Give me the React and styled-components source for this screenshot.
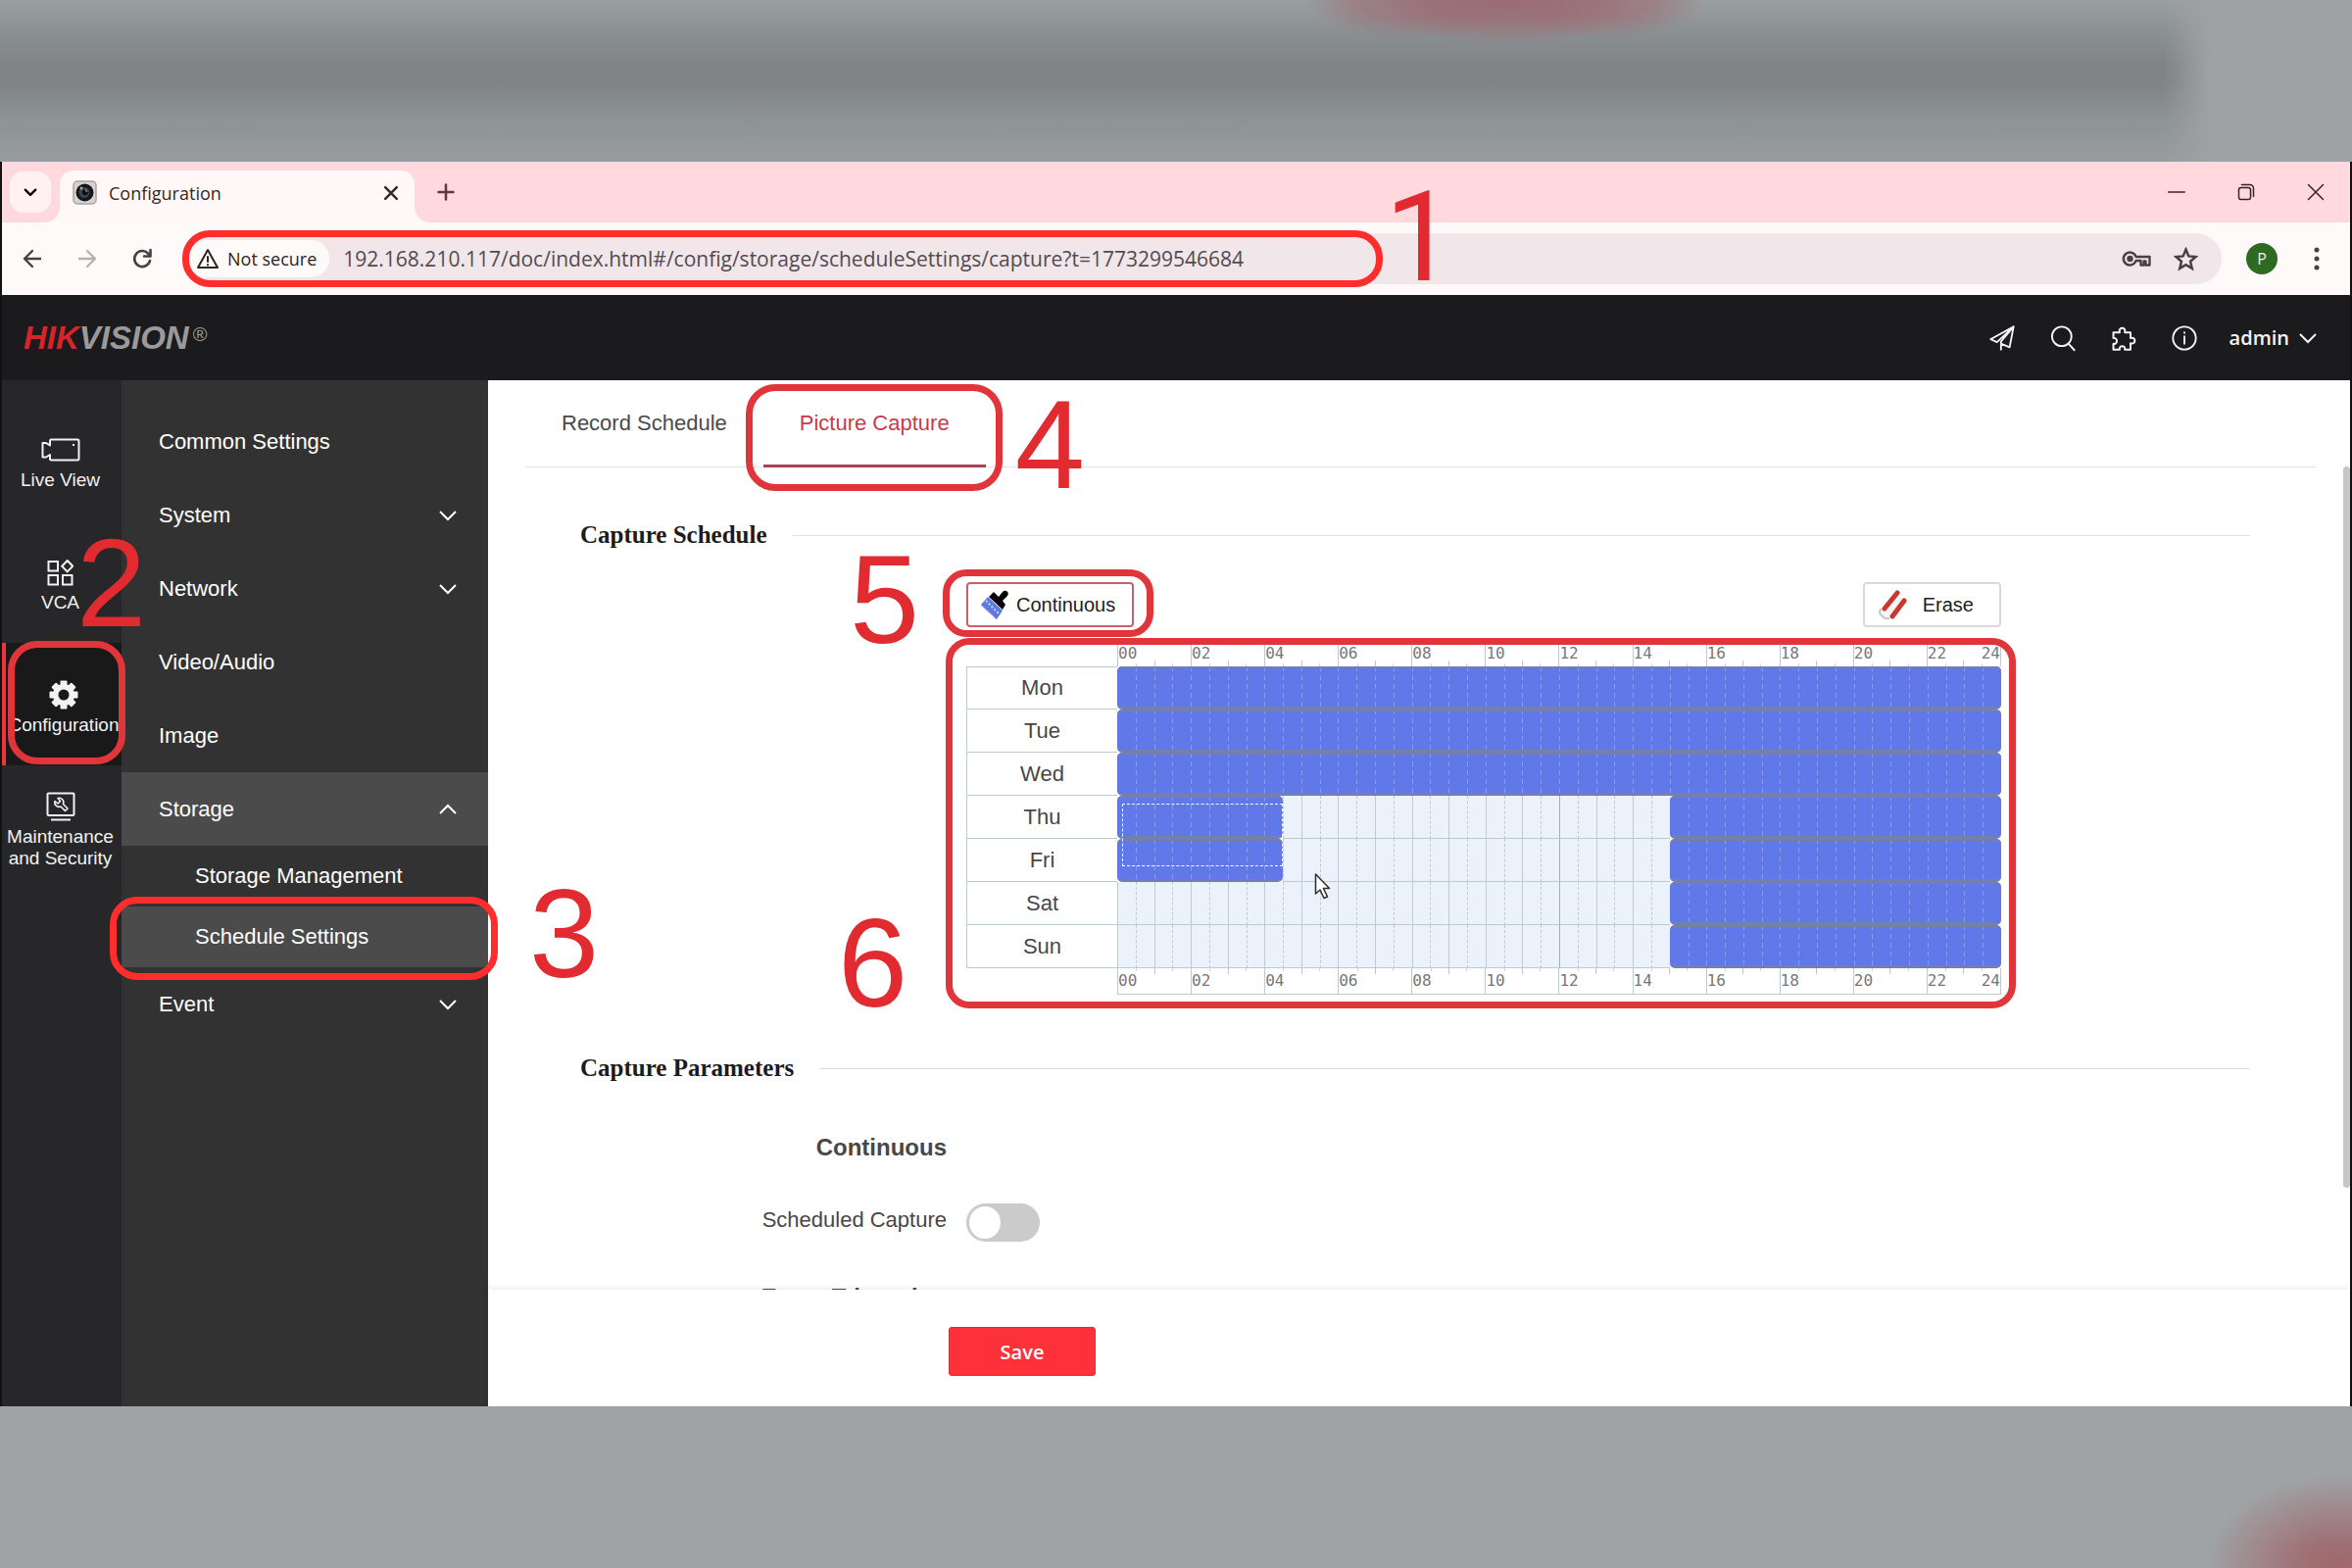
import React from "react";
import styled, { createGlobalStyle, css } from "styled-components";

const SANS = '"Liberation Sans", Arial, sans-serif';
const SERIF = '"Liberation Serif", "Times New Roman", serif';
const UI = '"Open Sans", "Noto Sans", sans-serif';
const MONO = '"DejaVu Sans Mono", "Liberation Mono", monospace';

const GlobalStyle = createGlobalStyle`
  *, *::before, *::after { box-sizing: border-box; }
  body { margin: 0; font-family: ${SANS}; }
  button, input { font: inherit; }
`;

const Backdrop = styled.div`
  display: flex;
  flex-direction: column;
  height: 100vh;
  min-height: 1500px;
  padding: 165px 0;
  overflow: hidden;
  background:
    radial-gradient(ellipse 135px 95px at calc(100% - 15px) 100%, #a0666a 0%, #a0666ad0 30%, #a0666a00 100%),
    radial-gradient(ellipse 110px 40px at 60% 0, #9c6a72b0 0%, #9c6a7290 50%, #9c6a7200 100%),
    radial-gradient(ellipse 110px 40px at 68% 0, #9c6a72b0 0%, #9c6a7290 50%, #9c6a7200 100%),
    radial-gradient(ellipse 130px 46px at 64% 0, #9c6a72 0%, #9c6a72b0 50%, #9c6a7200 100%),
    linear-gradient(90deg, #9ea2a400 92%, #9ea2a4 94%) top / 100% 165px no-repeat,
    linear-gradient(180deg, #9a9fa1 0, #8c9193 30px, #808487 65px, #808487 85px, #8d9294 120px, #979c9e 165px, #9fa3a5 200px);
`;

const Window = styled.div`
  flex: 1;
  min-height: 0;
  display: flex;
  flex-direction: column;
  border: solid #111;
  border-width: 0 2px;
  background: #fff;
`;

/* numbered guide marks laid over the controls they point to */
const Target = styled.div`
  position: relative;
`;

const Ring = styled.span`
  position: absolute;
  z-index: 3;
  left: ${(p) => p.$x}px;
  top: ${(p) => p.$y}px;
  width: ${(p) => p.$w}px;
  height: ${(p) => p.$h}px;
  border: 7px solid ${(p) => (p.$bright ? "#ff2d2c" : "#e0363b")};
  border-radius: ${(p) => p.$r || 24}px;
  pointer-events: none;
`;

const Digit = styled.span`
  position: absolute;
  z-index: 3;
  left: ${(p) => p.$x}px;
  top: ${(p) => p.$y}px;
  font-family: ${(p) => (p.$plain ? "Roboto, sans-serif" : SANS)};
  font-size: 128px;
  font-weight: 400;
  line-height: 132px;
  color: #e12b30;
  pointer-events: none;
`;

/* browser chrome */
const TabStrip = styled.div`
  flex: none;
  display: flex;
  align-items: flex-end;
  height: 62px;
  padding-left: 8px;
  background: #ffd9de;
`;

const PlainButton = styled.button`
  display: flex;
  align-items: center;
  justify-content: center;
  padding: 0;
  border: 0;
  background: none;
  color: inherit;
`;

const TabSearch = styled(PlainButton)`
  width: 42px;
  height: 42px;
  margin: 0 9px 10px 0;
  border-radius: 14px;
  background: #fff0f1;
`;

const BrowserTab = styled.div`
  position: relative;
  display: flex;
  align-items: center;
  gap: 12px;
  width: 362px;
  height: 53px;
  padding: 0 14px 8px 13px;
  border-radius: 14px 14px 0 0;
  background: #fff8f7;
  color: #33282b;
  font: 18px ${UI};
  &::before, &::after {
    content: "";
    position: absolute;
    bottom: 0;
    width: 14px;
    height: 14px;
  }
  &::before {
    right: 100%;
    background: radial-gradient(circle at 0 0, #fff8f700 13px, #fff8f7 14px);
  }
  &::after {
    left: 100%;
    background: radial-gradient(circle at 100% 0, #fff8f700 13px, #fff8f7 14px);
  }
`;

const TabTitle = styled.span`
  flex: 1;
`;

const NewTab = styled(PlainButton)`
  width: 40px;
  height: 40px;
  margin: 0 0 11px 12px;
  color: #5b3a42;
`;

const WindowButtons = styled.div`
  display: flex;
  margin-left: auto;
  height: 62px;
  color: #3a2327;
`;

const WindowButton = styled(PlainButton)`
  width: 71px;
`;

const Toolbar = styled.div`
  flex: none;
  display: flex;
  align-items: center;
  height: 74px;
  padding-left: 3px;
  background: #fffafa;
  color: #4a4044;
`;

const NavButton = styled(PlainButton)`
  width: 56px;
  height: 48px;
  color: ${(p) => (p.$off ? "#b9b0b2" : "#4a4044")};
`;

const Omnibox = styled.div`
  position: relative;
  flex: 1;
  display: flex;
  align-items: center;
  height: 52px;
  margin-left: 14px;
  padding: 0 12px 0 5px;
  border-radius: 26px;
  background: #f1e6ea;
`;

const SiteChip = styled(PlainButton)`
  gap: 8px;
  height: 38px;
  padding: 0 13px 0 8px;
  margin-right: 14px;
  border-radius: 19px;
  background: #fffafa;
  color: #2c2427;
  font: 500 18px ${UI};
`;

const Address = styled.input`
  flex: 1;
  min-width: 0;
  padding: 0;
  border: 0;
  outline: 0;
  background: none;
  color: #544b50;
  font: 21px ${UI};
`;

const OmniIcon = styled(PlainButton)`
  width: 50px;
  height: 40px;
`;

const Avatar = styled(PlainButton)`
  width: 32px;
  height: 32px;
  margin: 0 25px 0 25px;
  border-radius: 50%;
  background: #2f6a22;
  color: #e9f3e4;
  font: 16px ${UI};
`;

const Menu = styled(PlainButton)`
  width: 30px;
  height: 40px;
  margin-right: 19px;
`;

/* camera web client */
const Header = styled.header`
  flex: none;
  display: flex;
  align-items: center;
  height: 87px;
  padding: 0 34px 0 22px;
  background: #1b1b1d;
  color: #f4f4f4;
`;

const Brand = styled.span`
  display: flex;
  color: #9a9a9c;
  font: italic 700 33px ${SANS};
`;

const BrandRed = styled.span`
  color: #d6242b;
`;

const Registered = styled.sup`
  margin-left: 4px;
  font: 20px/30px ${SANS};
`;

const HeaderTools = styled.div`
  display: flex;
  align-items: center;
  gap: 30px;
  margin-left: auto;
`;

const HeaderButton = styled(PlainButton)`
  width: 32px;
  height: 40px;
`;

const UserButton = styled(PlainButton)`
  gap: 10px;
  height: 40px;
  font: 600 20px ${UI};
`;

const Body = styled.div`
  flex: 1;
  min-height: 0;
  display: flex;
`;

const Rail = styled.nav`
  flex: none;
  width: 122px;
  padding-top: 18px;
  background: #27272a;
`;

const RailLink = styled.a`
  display: flex;
  flex-direction: column;
  align-items: center;
  justify-content: center;
  gap: 4px;
  height: 125px;
  padding: 7px 3px 0 0;
  color: #f2f2f2;
  font-size: 19px;
  line-height: 22px;
  text-align: center;
  text-decoration: none;
  white-space: nowrap;
  ${(p) => p.$active && css`
    padding-right: 0;
    border-left: 4px solid #f0343a;
    background: #19191a;
  `}
`;

const RailIcon = styled.span`
  display: flex;
  align-items: center;
  justify-content: center;
  height: 32px;
`;

const Side = styled.nav`
  flex: none;
  width: 374px;
  padding-top: 25px;
  background: #323233;
`;

const SideLink = styled.a`
  display: flex;
  align-items: center;
  justify-content: space-between;
  height: ${(p) => (p.$sub ? 62 : 75)}px;
  padding: 0 32px 0 ${(p) => (p.$sub ? 75 : 38)}px;
  background: ${(p) => (p.$active ? "#4b4b4b" : "transparent")};
  color: #fff;
  font-size: 22px;
  text-decoration: none;
`;

const Main = styled.main`
  position: relative;
  flex: 1;
  min-width: 0;
  display: flex;
  flex-direction: column;
  background: #fff;
`;

const ScrollArea = styled.div`
  flex: 1;
  min-height: 0;
  overflow: hidden;
`;

const ScrollThumb = styled.span`
  position: absolute;
  top: 88px;
  right: 0;
  width: 7px;
  height: 736px;
  border-radius: 4px;
  background: #c6c6c6;
`;

const Tabs = styled.div`
  display: flex;
  height: 89px;
  margin: 0 35px 0 38px;
  border-bottom: 1px solid #e4e4e6;
`;

const Tab = styled.button`
  height: 89px;
  padding: 2px 37px 0;
  border: 0;
  border-bottom: 3px solid ${(p) => (p.$active ? "#a8405a" : "transparent")};
  background: none;
  color: ${(p) => (p.$active ? "#c83a4c" : "#4a4a4e")};
  font-size: 22px;
`;

const Section = styled.section`
  padding: ${(p) => (p.$first ? 54 : 60)}px 102px 0 94px;
`;

const SectionTitle = styled.h2`
  display: flex;
  align-items: center;
  gap: 26px;
  height: 30px;
  margin: 0 0 ${(p) => p.$gap}px;
  color: #1c1c1e;
  font: 700 25px/30px ${SERIF};
  white-space: nowrap;
  &::after {
    content: "";
    flex: 1;
    height: 1px;
    background: #e0e0e3;
  }
`;

const FormRow = styled.div`
  display: grid;
  grid-template-columns: 374px 1fr;
  column-gap: 20px;
`;

const ParamRow = styled(FormRow)`
  align-items: center;
  height: ${(p) => (p.$tall ? 84 : 74)}px;
`;

const ParamTitle = styled.h3`
  margin: 0;
  color: #47474a;
  font-size: 24px;
  text-align: right;
`;

const ParamLabel = styled.label`
  color: #47474a;
  font-size: 22px;
  text-align: right;
`;

const Toggle = styled.input`
  appearance: none;
  width: 75px;
  height: 39px;
  margin: 4px 0 0;
  padding: 3px;
  border-radius: 20px;
  background: #cbcbcb;
  &::before {
    content: "";
    display: block;
    width: 32px;
    height: 33px;
    border-radius: 50%;
    background: #fff;
  }
`;

const Scheduler = styled.div`
  grid-column: 2;
  margin-right: 254px;
`;

const BrushBar = styled.div`
  display: flex;
  justify-content: space-between;
  margin-bottom: 17px;
`;

const BrushButton = styled.button`
  display: flex;
  align-items: center;
  gap: ${(p) => (p.$active ? 6 : 16)}px;
  height: 46px;
  padding: 0 ${(p) => (p.$active ? 17 : 26)}px 0 13px;
  border: 2px solid ${(p) => (p.$active ? "#c9606e" : "#d9d9dc")};
  border-radius: 4px;
  background: #fff;
  color: #1d1d22;
  font-size: 20px;
`;

const WeekTable = styled.table`
  width: 100%;
  table-layout: fixed;
  border-collapse: separate;
  border-spacing: 0;
  color: #47474a;
  font-size: 22px;
`;

const DayColumn = styled.col`
  width: 154px;
`;

const Cell = styled.td`
  padding: 0;
`;

const DayCell = styled.th`
  height: 44px;
  padding: 0;
  border: solid #bccad2;
  border-width: 0 0 1px 1px;
  font-weight: 400;
  tr:first-child > & { border-top-width: 1px; }
`;

const Scale = styled.div`
  display: flex;
  height: ${(p) => (p.$foot ? 27 : 23)}px;
  border: solid #bccad2;
  border-width: 0 1px ${(p) => (p.$foot ? 1 : 0)}px 0;
  color: #77777a;
  font: 16px/20px ${MONO};
`;

const Hours = styled.span`
  flex: 1;
  display: flex;
  align-items: ${(p) => (p.$foot ? "center" : "flex-start")};
  justify-content: space-between;
  border-left: 1px solid #bccad2;
  background:
    linear-gradient(#c3c3c8, #c3c3c8) 50% ${(p) => (p.$foot ? 0 : "100%")} / 1px 6px no-repeat,
    linear-gradient(#d3d3d8, #d3d3d8) 25% ${(p) => (p.$foot ? 0 : "100%")} / 1px 3px no-repeat,
    linear-gradient(#d3d3d8, #d3d3d8) 75% ${(p) => (p.$foot ? 0 : "100%")} / 1px 3px no-repeat;
`;

const Track = styled.div`
  display: grid;
  grid-template-columns: repeat(48, minmax(0, 1fr));
  height: 44px;
`;

const Slot = styled.span`
  border-bottom: 1px solid #bccad2;
  border-left: 1px ${(p) => (p.$half ? "dashed" : "solid")} ${(p) => (p.$noon ? "#86b4de" : "#bfcad6")};
  background: #ebf2fb;
  ${(p) => p.$on && css`
    border-left: 0;
    border-bottom: 3px solid #747fae;
    background:
      repeating-linear-gradient(#8b9cec 0 5px, #6179e8 5px 9px) 0 0 / ${p.$start ? 0 : 1}px 100% no-repeat,
      #6179e8;
    box-shadow: inset 0 2px 0 #747fae;
  `}
  ${(p) => p.$start && css`border-radius: 5px 0 0 5px;`}
  ${(p) => p.$end && css`border-radius: 0 5px 5px 0;`}
`;

const Selection = styled.span`
  position: absolute;
  z-index: 2;
  top: 163px;
  left: 159px;
  width: 164px;
  height: 64px;
  border: 1px dashed #fff;
`;

const Pointer = styled.svg`
  position: absolute;
  z-index: 2;
  top: 233px;
  left: 355px;
`;

const Footer = styled.footer`
  position: relative;
  flex: none;
  height: 119px;
  padding: 38px 0 0 470px;
  background: #fff;
  box-shadow: 0 -2px 5px #00000012;
`;

const SaveButton = styled.button`
  width: 150px;
  height: 50px;
  border: 1px solid #d5303a;
  border-radius: 3px;
  background: #fc3139;
  color: #fff;
  font: 600 20px ${UI};
`;

function Icon({ w = 24, h = w, box = 24, stroke = 2, children }) {
  return (
    <svg width={w} height={h} viewBox={`0 0 ${box} ${box}`} fill="none" stroke="currentColor"
      strokeWidth={stroke} strokeLinecap="round" strokeLinejoin="round" aria-hidden="true">
      {children}
    </svg>
  );
}

const Chevron = ({ up }) => (
  <svg width="18" height="12" viewBox="0 0 18 12" fill="none" stroke="currentColor" strokeWidth="2" aria-hidden="true">
    <path d={up ? "M1 10 9 2l8 8" : "M1 2l8 8 8-8"} />
  </svg>
);

const Favicon = () => (
  <svg width="25" height="25" viewBox="0 0 25 25" aria-hidden="true">
    <rect x="1" y="1" width="23" height="23" rx="4" fill="#d5d2d1" stroke="#a9a4a4" strokeWidth="1.5" />
    <circle cx="12.500" cy="12.500" r="9" fill="#15161b" />
    <circle cx="12" cy="12.500" r="5.500" fill="#31464f" />
    <circle cx="13" cy="12" r="3" fill="#0b0b10" />
    <path d="M13 9l2 3" stroke="#d86b66" strokeWidth="1.500" />
    <circle cx="9" cy="8" r="1.500" fill="#8fb0b5" />
  </svg>
);

const CameraIcon = () => (
  <svg width="40" height="24" viewBox="0 0 40 24" fill="none" stroke="currentColor" strokeWidth="2" strokeLinejoin="round" aria-hidden="true">
    <path d="M10 1.500h27a1.500 1.500 0 0 1 1.500 1.500v18a1.500 1.500 0 0 1-1.500 1.500H10.500a1.500 1.500 0 0 1-1.500-1.500v-4l-4 2.500H1.500V5H5l4 2.500V3a1.500 1.500 0 0 1 1-1.500z" />
    <path d="M32 7h2" />
  </svg>
);

const VcaIcon = () => (
  <svg width="27" height="27" viewBox="0 0 27 27" fill="none" stroke="currentColor" strokeWidth="2" aria-hidden="true">
    <path d="M1.500 2h9.500v9.500H1.500zM1.500 16h9.500v9.500H1.500zM16 16h9.500v9.500H16zM20.700 1l5.500 5.700-5.500 5.700-5.500-5.700z" />
  </svg>
);

const GearIcon = () => (
  <svg width="30" height="30" viewBox="0 0 30 30" aria-hidden="true">
    <g fill="currentColor">
      {[0, 45, 90, 135].map((a) => (
        <rect key={a} x="11.500" y="0.500" width="7" height="29" rx="1" transform={`rotate(${a} 15 15)`} />
      ))}
      <circle cx="15" cy="15" r="11" />
    </g>
    <circle cx="15" cy="15" r="5.500" fill="#19191a" />
  </svg>
);

const MaintenanceIcon = () => (
  <svg width="30" height="30" viewBox="0 0 30 30" fill="none" stroke="currentColor" strokeWidth="2" strokeLinejoin="round" aria-hidden="true">
    <rect x="1.500" y="1.500" width="27" height="22.500" rx="1" />
    <path d="M5 28.500h20" />
    <path d="M12 6.500a4.500 4.500 0 0 1 5.500 6l4.500 4.500-2.500 2.500-4.500-4.500a4.500 4.500 0 0 1-6-5.500l3 2.500 2.500-2.500z" strokeWidth="1.600" />
  </svg>
);

const BrushIcon = () => (
  <svg width="30" height="31" viewBox="0 0 30 31" aria-hidden="true">
    <path d="M18 7l4-5q2-2 4-1 3 2 1 5l-5 5 3 4-3 5L8 7l5-5z" fill="#050508" />
    <path d="M7 7l15 14-6 9L0 15z" fill="#5f79de" />
    <path d="M5 11l13 13" stroke="#c7d2fa" strokeWidth="2" strokeDasharray="2 2" />
    <path d="M0 15l16 15" stroke="#8b9ee8" strokeWidth="1" />
  </svg>
);

const EraserIcon = () => (
  <svg width="30" height="31" viewBox="0 0 30 31" aria-hidden="true">
    <path d="M3 20L17 3l10 7-14 18q-5 2-8-2-3-3-2-6z" fill="#f6f3f2" />
    <path d="M7 19L20 3" stroke="#c9372f" strokeWidth="5" strokeLinecap="round" />
    <path d="M15 27L27 11" stroke="#c9372f" strokeWidth="5" strokeLinecap="round" />
    <path d="M4 19q-4 4 0 7 3 4 8 3" fill="none" stroke="#cbc4c4" strokeWidth="2" />
  </svg>
);

const DAYS = [
  ["Mon", [[0, 48]]],
  ["Tue", [[0, 48]]],
  ["Wed", [[0, 48]]],
  ["Thu", [[0, 9], [30, 48]]],
  ["Fri", [[0, 9], [30, 48]]],
  ["Sat", [[30, 48]]],
  ["Sun", [[30, 48]]],
];
const HALF_HOURS = Array.from({ length: 48 }, (_, i) => i);
const LABELS = ["00", "02", "04", "06", "08", "10", "12", "14", "16", "18", "20", "22"];

function HourScale({ foot }) {
  return (
    <Scale $foot={foot}>
      {LABELS.map((hour) => (
        <Hours key={hour} $foot={foot}>
          <span>{hour}</span>
          {hour === "22" && <span>24</span>}
        </Hours>
      ))}
    </Scale>
  );
}

function DayRow({ day, spans }) {
  return (
    <tr>
      <DayCell scope="row">{day}</DayCell>
      <Cell>
        <Track>
          {HALF_HOURS.map((i) => (
            <Slot
              key={i}
              $half={i % 2 === 1}
              $noon={i === 24}
              $on={spans.some(([a, b]) => i >= a && i < b)}
              $start={spans.some(([a]) => i === a)}
              $end={spans.some(([, b]) => i === b - 1)}
            />
          ))}
        </Track>
      </Cell>
    </tr>
  );
}

function BrowserChrome() {
  return (
    <>
      <TabStrip>
        <TabSearch aria-label="Search tabs">
          <Icon w={14} stroke={4}><path d="M3 8l9 9 9-9" /></Icon>
        </TabSearch>
        <BrowserTab>
          <Favicon />
          <TabTitle>Configuration</TabTitle>
          <PlainButton aria-label="Close tab">
            <Icon w={20} stroke={3}><path d="M5 5l14 14M19 5L5 19" /></Icon>
          </PlainButton>
        </BrowserTab>
        <NewTab aria-label="New tab">
          <Icon w={20} stroke={3}><path d="M12 3v18M3 12h18" /></Icon>
        </NewTab>
        <WindowButtons>
          <WindowButton aria-label="Minimize"><Icon w={18}><path d="M1 12h22" /></Icon></WindowButton>
          <WindowButton aria-label="Restore">
            <Icon w={18} stroke={2}><rect x="2" y="6" width="16" height="16" rx="3" /><path d="M6 2h11a5 5 0 0 1 5 5v11" /></Icon>
          </WindowButton>
          <WindowButton aria-label="Close"><Icon w={18} stroke={2}><path d="M2 2l20 20M22 2L2 22" /></Icon></WindowButton>
        </WindowButtons>
      </TabStrip>
      <Toolbar>
        <NavButton aria-label="Back"><Icon w={24} stroke={2.4}><path d="M20 12H4M12 4l-8 8 8 8" /></Icon></NavButton>
        <NavButton aria-label="Forward" $off><Icon w={24} stroke={2.4}><path d="M4 12h16M12 4l8 8-8 8" /></Icon></NavButton>
        <NavButton aria-label="Reload">
          <Icon w={24} stroke={2.6}><path d="M20 14a8 8 0 1 1-2-7.500L20 9" /><path d="M20.500 3v6.500H14" /></Icon>
        </NavButton>
        <Omnibox>
          <SiteChip>
            <Icon w={24} stroke={2}><path d="M12 3L2 21h20z" /><path d="M12 10v5M12 18v.5" /></Icon>
            Not secure
          </SiteChip>
          <Address aria-label="Address" readOnly value="192.168.210.117/doc/index.html#/config/storage/scheduleSettings/capture?t=1773299546684" />
          <OmniIcon aria-label="Saved passwords">
            <svg width="30" height="20" viewBox="0 0 30 20" fill="none" stroke="currentColor" strokeWidth="2.400" aria-hidden="true">
              <path d="M14.500 8A6.500 6.500 0 1 0 14.500 12h5v4.500h3V12.500h2v4h4V8z" strokeLinejoin="round" />
              <circle cx="8.500" cy="10" r="2" fill="currentColor" />
            </svg>
          </OmniIcon>
          <OmniIcon aria-label="Bookmark this tab">
            <Icon w={25} stroke={2.4}><path d="M12 2.500l2.700 6.500 7 .6-5.300 4.600 1.600 6.800L12 17.400 6 21l1.600-6.800L2.300 9.600l7-.6z" strokeLinejoin="miter" /></Icon>
          </OmniIcon>
          <Ring $x={-1} $y={-3} $w={1225} $h={58} $r={28} $bright />
          <Digit $x={1226} $y={-62} $plain>1</Digit>
        </Omnibox>
        <Avatar aria-label="Profile">P</Avatar>
        <Menu aria-label="Browser menu">
          <svg width="6" height="24" viewBox="0 0 6 24" fill="currentColor" aria-hidden="true">
            <circle cx="3" cy="3" r="2.500" /><circle cx="3" cy="12" r="2.500" /><circle cx="3" cy="21" r="2.500" />
          </svg>
        </Menu>
      </Toolbar>
    </>
  );
}

function ClientHeader() {
  return (
    <Header>
      <Brand><BrandRed>HIK</BrandRed>VISION<Registered>®</Registered></Brand>
      <HeaderTools>
        <HeaderButton aria-label="Guide">
          <Icon w={28} stroke={1.6}><path d="M22 2L2 13l5.500 2.500L22 2l-3.500 18-7-3M22 2L11 15v7" /></Icon>
        </HeaderButton>
        <HeaderButton aria-label="Search">
          <Icon w={28} stroke={1.6}><circle cx="11" cy="10.500" r="8.500" /><path d="M17 17l5 5.500" /></Icon>
        </HeaderButton>
        <HeaderButton aria-label="Plug-in">
          <Icon w={28} stroke={1.7}><path d="M3 7h5.500c-1.500-5 6-5 4.500 0H18v5c5-1.500 5 6 0 4.500V22h-5c1-4-5.500-4-4.500 0H3v-5c4 1 4-6 0-5z" /></Icon>
        </HeaderButton>
        <HeaderButton aria-label="About">
          <Icon w={28} stroke={1.6}><circle cx="12" cy="12" r="10" /><path d="M12 10.500V17M12 7v.5" /></Icon>
        </HeaderButton>
        <UserButton>admin <Chevron /></UserButton>
      </HeaderTools>
    </Header>
  );
}

export default function App() {
  return (
    <Backdrop>
      <GlobalStyle />
      <Window>
        <BrowserChrome />
        <ClientHeader />
        <Body>
          <Rail aria-label="Modules">
            <RailLink href="#live"><RailIcon><CameraIcon /></RailIcon>Live View</RailLink>
            <RailLink href="#vca"><RailIcon><VcaIcon /></RailIcon>VCA</RailLink>
            <Target>
              <RailLink href="#config" $active><RailIcon><GearIcon /></RailIcon>Configuration</RailLink>
              <Ring $x={6} $y={-2} $w={120} $h={126} $r={30} />
              <Digit $x={76} $y={-127}>2</Digit>
            </Target>
            <RailLink href="#maintenance"><RailIcon><MaintenanceIcon /></RailIcon>Maintenance<br />and Security</RailLink>
          </Rail>
          <Side aria-label="Configuration">
            <SideLink href="#common">Common Settings</SideLink>
            <SideLink href="#system">System<Chevron /></SideLink>
            <SideLink href="#network">Network<Chevron /></SideLink>
            <SideLink href="#video">Video/Audio</SideLink>
            <SideLink href="#image">Image</SideLink>
            <SideLink href="#storage" $active>Storage<Chevron up /></SideLink>
            <SideLink href="#storage-management" $sub>Storage Management</SideLink>
            <Target>
              <SideLink href="#schedule" $sub $active>Schedule Settings</SideLink>
              <Ring $x={-12} $y={-10} $w={396} $h={85} $r={28} $bright />
              <Digit $x={416} $y={-38}>3</Digit>
            </Target>
            <SideLink href="#event">Event<Chevron /></SideLink>
          </Side>
          <Main>
            <ScrollArea>
              <Tabs role="tablist">
                <Tab role="tab" aria-selected="false">Record Schedule</Tab>
                <Target>
                  <Tab role="tab" aria-selected="true" $active>Picture Capture</Tab>
                  <Ring $x={-18} $y={4} $w={262} $h={109} $r={30} />
                  <Digit $x={257} $y={0}>4</Digit>
                </Target>
              </Tabs>
              <Section $first>
                <SectionTitle $gap={33}>Capture Schedule</SectionTitle>
                <FormRow>
                  <Scheduler>
                    <BrushBar>
                      <Target>
                        <BrushButton $active><BrushIcon />Continuous</BrushButton>
                        <Ring $x={-24} $y={-13} $w={215} $h={69} />
                        <Digit $x={-119} $y={-48}>5</Digit>
                      </Target>
                      <BrushButton><EraserIcon />Erase</BrushButton>
                    </BrushBar>
                    <Target>
                      <WeekTable>
                        <colgroup><DayColumn /><col /></colgroup>
                        <thead><tr><Cell /><Cell><HourScale /></Cell></tr></thead>
                        <tbody>
                          {DAYS.map(([day, spans]) => <DayRow key={day} day={day} spans={spans} />)}
                        </tbody>
                        <tfoot><tr><Cell /><Cell><HourScale foot /></Cell></tr></tfoot>
                      </WeekTable>
                      <Selection />
                      <Pointer width="18" height="28" viewBox="0 0 18 28" aria-hidden="true">
                        <path d="M1.500 2v20l4.500-4 4 8.500 3.500-1.500-4-8.500h6z" fill="#fff" stroke="#333" strokeWidth="1.600" strokeLinejoin="round" />
                      </Pointer>
                      <Ring $x={-21} $y={-6} $w={1092} $h={378} />
                      <Digit $x={-131} $y={260}>6</Digit>
                    </Target>
                  </Scheduler>
                </FormRow>
              </Section>
              <Section>
                <SectionTitle $gap={29}>Capture Parameters</SectionTitle>
                <ParamRow><ParamTitle>Continuous</ParamTitle></ParamRow>
                <ParamRow>
                  <ParamLabel htmlFor="scheduled-capture">Scheduled Capture</ParamLabel>
                  <Toggle id="scheduled-capture" type="checkbox" role="switch" />
                </ParamRow>
                <ParamRow $tall><ParamTitle>Event Triggering</ParamTitle></ParamRow>
              </Section>
            </ScrollArea>
            <ScrollThumb />
            <Footer><SaveButton>Save</SaveButton></Footer>
          </Main>
        </Body>
      </Window>
    </Backdrop>
  );
}
